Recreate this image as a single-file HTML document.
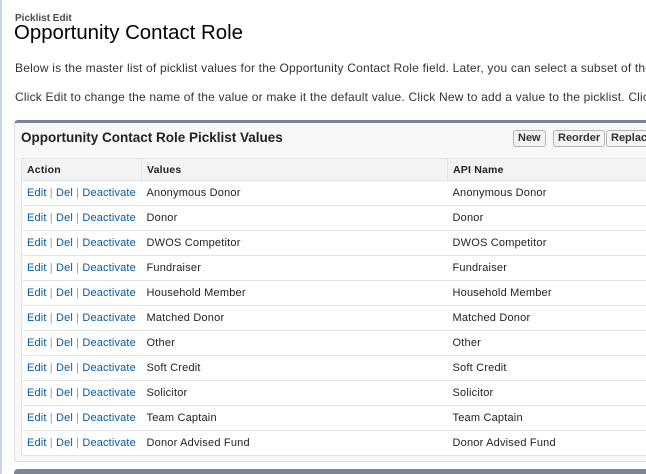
<!DOCTYPE html>
<html><head><style>
*{margin:0;padding:0;box-sizing:border-box}
html,body{width:646px;height:474px;overflow:hidden}
body{background:#fff;font-family:"Liberation Sans",Arial,sans-serif;color:#222;position:relative}
.lb{position:absolute;left:0;top:0;width:2px;height:474px;background:#c5d5ea}
.sub{position:absolute;left:15px;top:13px;font-size:10px;font-weight:bold;color:#4a4a56}
h1{position:absolute;left:14px;top:22px;font-size:20.4px;font-weight:normal;color:#000}
.p{position:absolute;left:15px;width:631px;overflow:hidden;font-size:12px;letter-spacing:0.2px;color:#333;white-space:nowrap}
.panel{position:absolute;left:14px;top:120px;width:632px;height:342px;background:#f8f8f8;border:1px solid #e0e0e0;border-right:none;border-top:3px solid #7c8598;border-radius:4px 0 0 4px;overflow:hidden}
.pt{position:absolute;left:6px;top:7px;font-size:13.5px;font-weight:bold;color:#222}
.btn{position:absolute;top:7px;height:17px;border:1px solid #b5b5b5;border-radius:3px;background:#f4f4f4;font-size:11px;font-weight:bold;color:#333;line-height:15px;padding:0 4px;white-space:nowrap}
table{position:absolute;left:6px;top:35px;width:640px;table-layout:fixed;border-collapse:collapse;background:#fff;font-size:11px;letter-spacing:0.2px}
th{height:22px;background:#f2f3f3;text-align:left;font-weight:bold;font-size:10.5px;color:#222;padding:0 5px;border:1px solid #e0e3e5;border-right:none}
td{height:25px;padding:0 5px;border-bottom:1px solid #e3e3e3;vertical-align:middle;color:#222;white-space:nowrap;overflow:hidden}
th:first-child,td:first-child{border-left:1px solid #e0e3e5}
td:first-child{padding-left:5px;color:#015ba7;letter-spacing:0.15px}
td .s{color:#999}
.bar{position:absolute;left:14px;top:469px;width:632px;height:5px;background:#7c8598;border-radius:4px 0 0 0}
</style></head><body>
<div class="lb"></div>
<div class="sub">Picklist Edit</div>
<h1>Opportunity Contact Role</h1>
<div class="p" style="top:61px">Below is the master list of picklist values for the Opportunity Contact Role field. Later, you can select a subset of these values for each record type.</div>
<div class="p" style="top:90px">Click Edit to change the name of the value or make it the default value. Click New to add a value to the picklist. Click Reorder to change the order.</div>
<div class="panel">
<div class="pt">Opportunity Contact Role Picklist Values</div>
<div class="btn" style="left:498px">New</div>
<div class="btn" style="left:538px">Reorder</div>
<div class="btn" style="left:591px">Replace</div>
<table>
<colgroup><col style="width:120px"><col style="width:306px"><col></colgroup>
<tr><th>Action</th><th>Values</th><th>API Name</th></tr>
<tr><td>Edit <span class="s">|</span> Del <span class="s">|</span> Deactivate</td><td>Anonymous Donor</td><td>Anonymous Donor</td></tr>
<tr><td>Edit <span class="s">|</span> Del <span class="s">|</span> Deactivate</td><td>Donor</td><td>Donor</td></tr>
<tr><td>Edit <span class="s">|</span> Del <span class="s">|</span> Deactivate</td><td>DWOS Competitor</td><td>DWOS Competitor</td></tr>
<tr><td>Edit <span class="s">|</span> Del <span class="s">|</span> Deactivate</td><td>Fundraiser</td><td>Fundraiser</td></tr>
<tr><td>Edit <span class="s">|</span> Del <span class="s">|</span> Deactivate</td><td>Household Member</td><td>Household Member</td></tr>
<tr><td>Edit <span class="s">|</span> Del <span class="s">|</span> Deactivate</td><td>Matched Donor</td><td>Matched Donor</td></tr>
<tr><td>Edit <span class="s">|</span> Del <span class="s">|</span> Deactivate</td><td>Other</td><td>Other</td></tr>
<tr><td>Edit <span class="s">|</span> Del <span class="s">|</span> Deactivate</td><td>Soft Credit</td><td>Soft Credit</td></tr>
<tr><td>Edit <span class="s">|</span> Del <span class="s">|</span> Deactivate</td><td>Solicitor</td><td>Solicitor</td></tr>
<tr><td>Edit <span class="s">|</span> Del <span class="s">|</span> Deactivate</td><td>Team Captain</td><td>Team Captain</td></tr>
<tr><td>Edit <span class="s">|</span> Del <span class="s">|</span> Deactivate</td><td>Donor Advised Fund</td><td>Donor Advised Fund</td></tr>
</table>
</div>
<div class="bar"></div>
</body></html>
